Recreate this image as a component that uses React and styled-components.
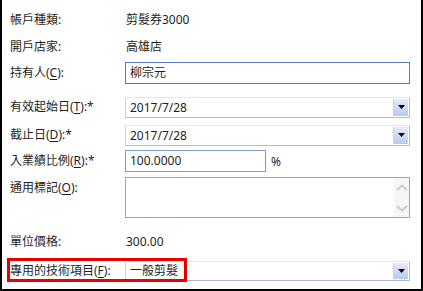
import React from "react";
import styled, {createGlobalStyle} from "styled-components";

const Global = createGlobalStyle`
  html, body {
    margin: 0;
    padding: 0;
    background: #fff;
  }
  body {
    font-family: "Noto Sans", "Noto Sans CJK TC", sans-serif;
    font-size: 12px;
    color: #1e1e1e;
  }
`;

const Panel = styled.div`
  box-sizing: border-box;
  width: 423px;
  height: 291px;
  border: 2px solid #000;
  border-top: none;
  padding: 9px 11px 0 8px;
  display: flex;
  flex-direction: column;
  overflow: hidden;
`;

const Row = styled.div`
  position: relative;
  display: grid;
  grid-template-columns: 115px 1fr;
  align-items: ${p => (p.$top ? "start" : "center")};
  height: ${p => p.$h}px;
  margin-top: ${p => p.$mt || 0}px;
`;

const Label = styled.div`
  white-space: nowrap;
  line-height: 22px;
  padding-top: ${p => (p.$top ? "0" : "0")};
`;

const Value = styled.div`
  padding-left: 1px;
  line-height: 22px;
`;

const U = styled.span`
  text-decoration: underline;
  text-underline-offset: 2px;
`;

const TextBox = styled.div`
  box-sizing: border-box;
  height: ${p => p.$h || 22}px;
  width: ${p => (p.$w ? `${p.$w}px` : "auto")};
  border: 1px solid ${p => (p.$focus ? "#4f7fb6" : "#7c9cc2")};
  padding: 0 4px;
  line-height: 20px;
  background: #fff;
`;

const Inline = styled.div`
  display: flex;
  align-items: center;
  gap: 5px;
`;

const Combo = styled.div`
  box-sizing: border-box;
  height: ${p => p.$h || 21}px;
  border: 1px solid #a9bdd6;
  border-top-color: #e2e8ef;
  border-left-color: #c5d3e3;
  display: flex;
  align-items: stretch;
  background: #fff;
`;

const ComboText = styled.div`
  flex: 1;
  padding-left: 4px;
  line-height: ${p => (p.$h || 21) - 2}px;
`;

const DropBtn = styled.div`
  width: 14px;
  margin: 1px;
  background: linear-gradient(#e4ecf9, #b7cbee);
  border-left: 1px solid #c6d4ea;
  display: flex;
  align-items: center;
  justify-content: center;
`;

const Area = styled.div`
  box-sizing: border-box;
  height: 41px;
  border: 1px solid #8fa8c7;
  display: flex;
  justify-content: flex-end;
`;

const ScrollBar = styled.div`
  width: 15px;
  background: #f5f6f7;
  display: flex;
  flex-direction: column;
  justify-content: space-between;
  align-items: center;
  padding: 6px 0 5px;
`;

const RedMark = styled.div`
  position: absolute;
  left: -3px;
  top: -2px;
  width: 180px;
  height: 24px;
  border: 3px solid #e60000;
  box-sizing: border-box;
  pointer-events: none;
`;

const Arrow = () => (
  <svg width="7" height="4" viewBox="0 0 7 4">
    <path d="M0 0h7L3.5 4z" fill="#000" />
  </svg>
);

const Chevron = ({up}) => (
  <svg width="12" height="7" viewBox="0 0 12 7">
    <path
      d={up ? "M1 6L6 1.5L11 6" : "M1 1L6 5.5L11 1"}
      fill="none"
      stroke="#c4ccd4"
      strokeWidth="2"
    />
  </svg>
);

const ComboBox = ({value, h}) => (
  <Combo $h={h}>
    <ComboText $h={h}>{value}</ComboText>
    <DropBtn>
      <Arrow />
    </DropBtn>
  </Combo>
);

const App = () => (
  <>
    <Global />
    <Panel>
      <Row $h={22}>
        <Label>帳戶種類:</Label>
        <Value>剪髮券3000</Value>
      </Row>
      <Row $h={22} $mt={5}>
        <Label>開戶店家:</Label>
        <Value>高雄店</Value>
      </Row>
      <Row $h={22} $mt={4}>
        <Label>持有人(<U>C</U>):</Label>
        <TextBox $focus>柳宗元</TextBox>
      </Row>
      <Row $h={21} $mt={12}>
        <Label>有效起始日(<U>T</U>):*</Label>
        <ComboBox value="2017/7/28" />
      </Row>
      <Row $h={21} $mt={7}>
        <Label>截止日(<U>D</U>):*</Label>
        <ComboBox value="2017/7/28" />
      </Row>
      <Row $h={22} $mt={5}>
        <Label>入業績比例(<U>R</U>):*</Label>
        <Inline>
          <TextBox $w={141}>100.0000</TextBox>
          <span>%</span>
        </Inline>
      </Row>
      <Row $h={41} $mt={5} $top>
        <Label>通用標記(<U>O</U>):</Label>
        <Area>
          <ScrollBar>
            <Chevron up />
            <Chevron />
          </ScrollBar>
        </Area>
      </Row>
      <Row $h={22} $mt={13}>
        <Label>單位價格:</Label>
        <Value>300.00</Value>
      </Row>
      <Row $h={20} $mt={7}>
        <RedMark />
        <Label>專用的技術項目(<U>F</U>):</Label>
        <ComboBox value="一般剪髮" h={20} />
      </Row>
    </Panel>
  </>
);

export default App;
